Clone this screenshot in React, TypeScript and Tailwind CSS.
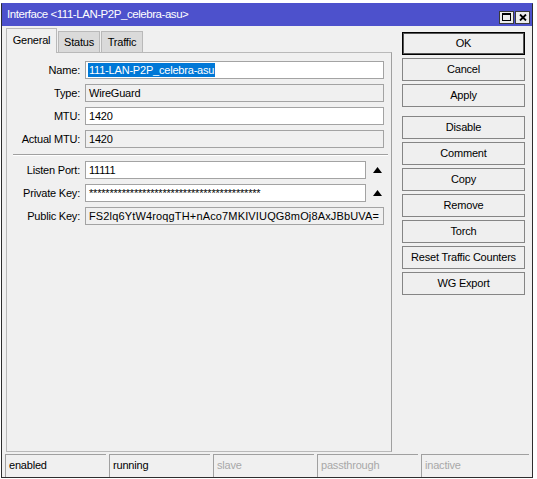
const font = "font-['Liberation_Sans',Arial,sans-serif]"

function Field({ label, value, readOnly, selected, width = 'w-[299px]', arrow, wide }: {
  label: string
  value: string
  readOnly?: boolean
  selected?: boolean
  width?: string
  arrow?: boolean
  wide?: boolean
}) {
  return (
    <div className="flex items-center h-[18px]">
      <div className="w-[74px] text-right pr-[1px] text-black">{label}</div>
      <div
        className={`ml-[4px] h-[18px] ${width} border border-[#a3a3a3] flex items-center pl-[2px] overflow-hidden whitespace-nowrap ${readOnly ? 'bg-[#f0f0f0]' : 'bg-white'}`}
      >
        {selected ? (
          <span className="bg-[#0078d7] text-white px-[1px] leading-[14px]">{value}</span>
        ) : (
          <span className={`px-[1px] ${wide ? 'tracking-[0.15px]' : ''}`}>{value}</span>
        )}
      </div>
      {arrow && (
        <svg className="ml-[7px]" width="9" height="6" viewBox="0 0 9 6">
          <polygon points="4.5,0 9,6 0,6" fill="#000" />
        </svg>
      )}
    </div>
  )
}

function Btn({ label, primary }: { label: string; primary?: boolean }) {
  return (
    <div
      className={`h-[23px] w-[123px] flex items-center justify-center bg-[#efefef] text-black ${primary ? 'border border-black shadow-[inset_0_0_0_1px_#555]' : 'border border-[#858585]'}`}
    >
      {label}
    </div>
  )
}

function Cell({ label, dim, w = 'w-[101px]' }: { label: string; dim?: boolean; w?: string }) {
  return (
    <div className={`${w} h-[23px] border-t border-l border-[#a0a0a0] flex items-center pl-[3px] pb-[2px] ${dim ? 'text-[#a8a8a8]' : 'text-black'}`}>
      {label}
    </div>
  )
}

export default function App() {
  return (
    <div className={`w-[537px] h-[479px] bg-white overflow-hidden ${font} text-[11px] tracking-[-0.2px]`}>
      <div className="ml-[1px] mt-[3px] w-[532px] h-[475px] border border-[#2e2e2e] border-t-[#4d51cc] bg-[#f0f0f0] flex flex-col">
        {/* title bar */}
        <div className="h-[22px] bg-[#4d51cc] flex items-center pl-[5px] pr-[2px] text-white text-[11.5px] tracking-[-0.45px]">
          <span className="flex-1">Interface &lt;111-LAN-P2P_celebra-asu&gt;</span>
          <div className="flex gap-[1px] mt-[4px]">
            <div className="w-[15px] h-[13px] bg-[#ececec] border border-[#3a3a3a] flex items-center justify-center">
              <svg width="9" height="8" viewBox="0 0 9 8">
                <rect x="0.5" y="0.5" width="8" height="7" fill="none" stroke="#000" />
                <rect x="0" y="0" width="9" height="2" fill="#000" />
              </svg>
            </div>
            <div className="w-[15px] h-[13px] bg-[#ececec] border border-[#3a3a3a] flex items-center justify-center">
              <svg width="8" height="7" viewBox="0 0 8 7">
                <path d="M1 0.5 L7 6.5 M7 0.5 L1 6.5" stroke="#000" strokeWidth="1.8" />
              </svg>
            </div>
          </div>
        </div>

        {/* body */}
        <div className="flex pl-[4px] pt-[2px] h-[426px]">
          <div className="w-[386px] flex flex-col">
            <div className="flex items-end h-[24px]">
              <div className="relative z-10 -mb-px h-[25px] w-[51px] bg-[#f0f0f0] border border-b-0 border-[#b9b9b9] flex items-center justify-center pb-[2px]">
                General
              </div>
              <div className="h-[21px] w-[42px] ml-[1px] bg-[#dadada] border border-b-0 border-[#b9b9b9] flex items-center justify-center">
                Status
              </div>
              <div className="h-[21px] w-[42px] ml-[1px] bg-[#dadada] border border-b-0 border-[#b9b9b9] flex items-center justify-center">
                Traffic
              </div>
            </div>
            <div className="h-[400px] border border-[#b9b9b9] border-r-[#a0a0a0] pt-[8px] flex flex-col">
              <div className="flex flex-col gap-[5px]">
                <Field label="Name:" value="111-LAN-P2P_celebra-asu" selected />
                <Field label="Type:" value="WireGuard" readOnly />
                <Field label="MTU:" value="1420" />
                <Field label="Actual MTU:" value="1420" readOnly />
              </div>
              <div className="ml-[6px] mt-[6px] w-[375px] h-[2px] border-t border-[#a0a0a0] border-b border-b-white" />
              <div className="flex flex-col gap-[5px] mt-[5px]">
                <Field label="Listen Port:" value="11111" width="w-[281px]" arrow />
                <Field label="Private Key:" value={'*'.repeat(42)} width="w-[281px]" arrow />
                <Field label="Public Key:" value="FS2lq6YtW4roqgTH+nAco7MKIVIUQG8mOj8AxJBbUVA=" readOnly wide />
              </div>
            </div>
          </div>

          <div className="ml-[10px] pt-[4px] flex flex-col gap-[3px]">
            <Btn label="OK" primary />
            <Btn label="Cancel" />
            <Btn label="Apply" />
            <div className="mt-[6px]">
              <Btn label="Disable" />
            </div>
            <Btn label="Comment" />
            <Btn label="Copy" />
            <Btn label="Remove" />
            <Btn label="Torch" />
            <Btn label="Reset Traffic Counters" />
            <Btn label="WG Export" />
          </div>
        </div>

        {/* status bar */}
        <div className="flex pl-[3px] pt-[2px] gap-[3px]">
          <Cell label="enabled" />
          <Cell label="running" />
          <Cell label="slave" dim />
          <Cell label="passthrough" dim />
          <Cell label="inactive" dim w="w-[108px]" />
        </div>
      </div>
    </div>
  )
}
